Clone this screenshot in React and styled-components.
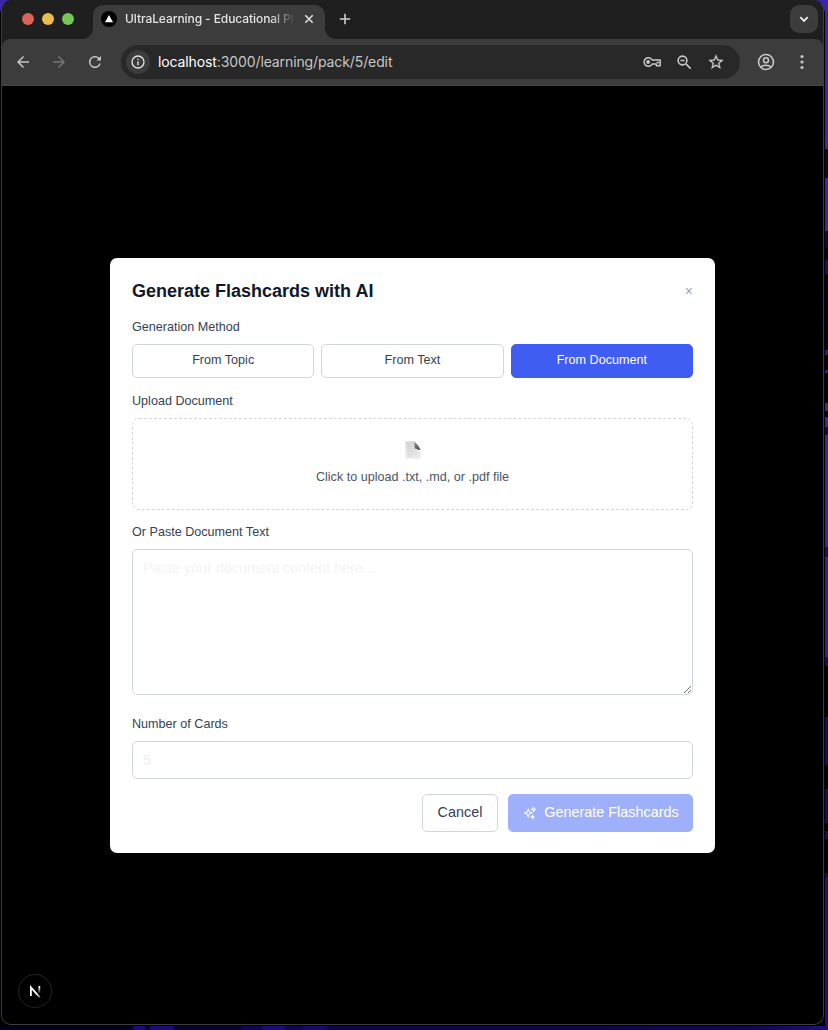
import React from "react";
import styled, { createGlobalStyle } from "styled-components";

const Global = createGlobalStyle`
  * { box-sizing: border-box; }
  html, body { margin: 0; height: 100%; overflow: hidden; }
  button, input, textarea { font: inherit; margin: 0; }
`;

const stripes = [
  [0, 149, "#3a26a8"], [149, 178, "#0a0520"], [178, 231, "#3a26a0"], [231, 247, "#120540"],
  [247, 260, "#04010c"], [260, 274, "#1e0a6a"], [274, 350, "#07021a"], [350, 355, "#2a1680"],
  [355, 370, "#04010c"], [370, 373, "#2c1a8c"], [373, 403, "#04010c"], [403, 411, "#3a26a0"],
  [411, 417, "#04010c"], [417, 427, "#3a26a0"], [427, 435, "#170750"], [435, 547, "#3a26a0"],
  [547, 557, "#1d0c66"], [557, 657, "#3320a0"], [657, 666, "#1b0670"], [666, 717, "#030108"],
  [717, 765, "#1b0670"], [765, 789, "#030108"], [789, 823, "#1b0670"], [823, 831, "#030108"],
  [831, 839, "#1b0670"], [839, 873, "#030108"], [873, 877, "#170750"], [877, 1030, "#1f0f78"],
];
const sideGradient = stripes.map(([a, b, c]) => `${c} ${a}px ${b}px`).join(", ");

const Desktop = styled.div`
  width: 828px;
  height: 1030px;
  padding: 0 4px 5px 1px;
  overflow: hidden;
  background:
    linear-gradient(180deg, ${sideGradient}) right top / 3px 100% no-repeat,
    linear-gradient(90deg, #03011a 0 132px, #1c0a78 134px 144px, #08032a 146px 149px,
      #1c0a78 151px 172px, #08032a 176px 240px, #120650 242px 262px, #1c0a78 263px 284px,
      #120650 286px 302px, #180a68 304px 325px, #0c0640 330px 600px, #120850 760px,
      #1f0f78 828px) left bottom / 100% 4px no-repeat,
    linear-gradient(180deg, #3a26a8 0 10px, #020106 12px);
`;
const Window = styled.div`
  height: 1025px;
  display: flex;
  flex-direction: column;
  overflow: hidden;
  background: #1f1f1f;
  border: 1px solid #3c3c3c;
  border-top-color: #1f1f1f;
  border-radius: 10px;
  font-family: "Liberation Sans", Arial, sans-serif;
`;
const TabStrip = styled.div`
  height: 38px;
  flex: none;
  display: flex;
  background: #1f1f1f;
`;
const Lights = styled.div`
  width: 91px;
  padding: 12px 0 0 20px;
  display: flex;
  gap: 8px;
`;
const Light = styled.i`
  width: 12px;
  height: 12px;
  border-radius: 50%;
  background: ${(p) => p.$color};
`;
const Tab = styled.div`
  position: relative;
  width: 232px;
  height: 34px;
  margin-top: 4px;
  padding: 0 10px 6px 8px;
  display: flex;
  align-items: center;
  background: #3c3c3c;
  border-radius: 10px 10px 0 0;
  &::before, &::after {
    content: "";
    position: absolute;
    bottom: 0;
    width: 10px;
    height: 10px;
  }
  &::before { left: -10px; background: radial-gradient(circle at 0 0, transparent 9.5px, #3c3c3c 10px); }
  &::after { right: -10px; background: radial-gradient(circle at 100% 0, transparent 9.5px, #3c3c3c 10px); }
`;
const TabTitle = styled.span`
  flex: 1;
  margin: 0 4px 0 8px;
  overflow: hidden;
  white-space: nowrap;
  font: 500 12px/18px Inter, Roboto, sans-serif;
  letter-spacing: -0.08px;
  color: #e3e3e3;
  mask-image: linear-gradient(90deg, #000 146px, transparent 170px);
`;
const NewTab = styled.div`
  padding: 12px 0 0 14px;
  height: 24px;
  line-height: 0;
`;
const TabSearch = styled.div`
  width: 28px;
  height: 28px;
  margin: 4px 5px 0 auto;
  display: grid;
  place-items: center;
  border-radius: 9px;
  background: #3c3c3c;
`;
const Toolbar = styled.div`
  height: 47px;
  flex: none;
  padding: 0 13px 0 12px;
  display: flex;
  align-items: center;
  background: #3c3c3c;
  border-bottom: 1px solid #484848;
  border-radius: 8px 8px 0 0;
`;
const NavButtons = styled.div`
  width: 107px;
  display: flex;
  gap: 18px;
`;
const AddressBar = styled.div`
  width: 619px;
  height: 34px;
  padding: 0 15px 0 5px;
  display: flex;
  align-items: center;
  border-radius: 17px;
  background: #282828;
`;
const SiteInfo = styled.div`
  width: 24px;
  height: 24px;
  display: grid;
  place-items: center;
  border-radius: 50%;
  background: #3c3c3c;
`;
const Url = styled.span`
  flex: 1;
  margin-left: 8px;
  font: 400 14px/20px Inter, Roboto, sans-serif;
  letter-spacing: -0.11px;
  color: #c7c7c7;
  b { font-weight: 400; color: #fff; }
`;
const AddressIcons = styled.div`
  display: flex;
  align-items: center;
  gap: 13.5px;
`;
const ToolbarEnd = styled.div`
  margin-left: auto;
  display: flex;
  align-items: center;
  gap: 18px;
`;
const Viewport = styled.main`
  position: relative;
  flex: 1;
  padding: 172px 0 0 108px;
  background: #000;
`;
const Dialog = styled.section`
  width: 605px;
  height: 595px;
  padding: 22px;
  background: #fff;
  border-radius: 7px;
`;
const DialogHeader = styled.header`
  height: 22px;
  margin-bottom: 16px;
  display: flex;
  justify-content: space-between;
  align-items: center;
`;
const Title = styled.h2`
  margin: 0;
  font-size: 18px;
  line-height: 22px;
  font-weight: 700;
  color: #101828;
`;
const Close = styled.button`
  padding: 0;
  border: 0;
  background: none;
  font-size: 14px;
  line-height: 20px;
  color: #99a1af;
`;
const Label = styled.label`
  display: block;
  height: 18px;
  margin-bottom: 8px;
  font-size: 12.6px;
  line-height: 18px;
  color: #364153;
`;
const Methods = styled.div`
  display: grid;
  grid-template-columns: repeat(3, 1fr);
  gap: 7px;
  margin-bottom: 14px;
`;
const Method = styled.button`
  height: 34px;
  padding: 0 0 2px;
  border: 1px solid ${(p) => (p.$active ? "#405df2" : "#d1d5dc")};
  border-radius: 5px;
  background: ${(p) => (p.$active ? "#405df2" : "#fff")};
  color: ${(p) => (p.$active ? "#fff" : "#364153")};
  font-size: 12.6px;
`;
const DropZone = styled.div`
  height: 92px;
  margin-bottom: 13px;
  padding-top: 22px;
  display: flex;
  flex-direction: column;
  align-items: center;
  gap: 9px;
  border: 1px dashed #d1d5dc;
  border-radius: 7px;
  font-size: 12.6px;
  line-height: 18px;
  color: #4a5565;
`;
const TextArea = styled.textarea`
  display: block;
  width: 100%;
  height: 146px;
  margin-bottom: 20px;
  padding: 8px 10px;
  border: 1px solid #d1d5dc;
  border-radius: 5px;
  background: #fff;
  font-size: 14.4px;
  line-height: 21px;
  resize: vertical;
  &::placeholder { color: #f4f4f5; }
`;
const NumberInput = styled.input`
  display: block;
  width: 100%;
  height: 38px;
  padding: 0 10px;
  border: 1px solid #d1d5dc;
  border-radius: 5px;
  background: #fff;
  font-size: 14.4px;
  color: #ededed;
`;
const Actions = styled.footer`
  margin-top: 15px;
  display: flex;
  justify-content: flex-end;
  gap: 10px;
`;
const Action = styled.button`
  width: ${(p) => p.$width}px;
  height: 38px;
  padding: 0 0 2px;
  display: flex;
  justify-content: center;
  align-items: center;
  gap: 8px;
  white-space: nowrap;
  border: 1px solid ${(p) => (p.$primary ? "#9fb0fb" : "#d1d5dc")};
  border-radius: 5px;
  background: ${(p) => (p.$primary ? "#9fb0fb" : "#fff")};
  color: ${(p) => (p.$primary ? "#fff" : "#364153")};
  font-size: 14.4px;
  svg { margin: 2px -1px 0 1px; }
`;
const DevBadge = styled.div`
  position: absolute;
  left: 16px;
  bottom: 16px;
  width: 34px;
  height: 34px;
  display: grid;
  place-items: center;
  border: 1.5px solid #242424;
  border-radius: 50%;
  background: #000;
`;

const Icon = ({ size = 20, box = 24, color = "#c7c7c7", children }) => (
  <svg width={size} height={size} viewBox={`0 0 ${box} ${box}`} fill={color}>{children}</svg>
);

const BackIcon = () => (
  <Icon size={18}><path d="M20 11H7.8l5.6-5.6L12 4l-8 8 8 8 1.4-1.4L7.8 13H20z" /></Icon>
);
const ForwardIcon = () => (
  <Icon size={18} color="#757575"><path d="M4 13h12.2l-5.6 5.6L12 20l8-8-8-8-1.4 1.4 5.6 5.6H4z" /></Icon>
);
const ReloadIcon = () => (
  <Icon size={18}><path d="M17.65 6.35A8 8 0 1 0 19.73 14h-2.08A6 6 0 1 1 12 6c1.66 0 3.14.69 4.22 1.78L14 10h6V4z" /></Icon>
);
const InfoIcon = () => (
  <Icon size={16} color="#e3e3e3"><path d="M11 7h2v2h-2zm0 4h2v6h-2zm1-9a10 10 0 1 0 0 20 10 10 0 0 0 0-20zm0 18a8 8 0 1 1 0-16 8 8 0 0 1 0 16z" /></Icon>
);
const KeyIcon = () => (
  <svg width="18" height="12" viewBox="0 0 18 12" fill="none" stroke="#c7c7c7" strokeWidth="1.5">
    <path d="M9.2 4H17.2v5.8h-3.8V8H9.2A4.3 4.3 0 1 1 9.2 4z" strokeLinejoin="round" />
    <path d="M13.6 6.4h3" />
    <circle cx="5.1" cy="6" r="1.9" fill="#c7c7c7" stroke="none" />
  </svg>
);
const ZoomIcon = () => (
  <Icon size={19}><path d="M15.5 14h-.79l-.28-.27A6.5 6.5 0 1 0 13.73 14.43l.27.28v.79l5 4.99L20.49 19zm-6 0a4.5 4.5 0 1 1 0-9 4.5 4.5 0 0 1 0 9zM6.8 8.6h5.4v1.8H6.8z" /></Icon>
);
const StarIcon = () => (
  <Icon size={18}><path stroke="#c7c7c7" strokeWidth=".3" d="m22 9.24-7.19-.62L12 2 9.19 8.63 2 9.24l5.46 4.73L5.82 21 12 17.27 18.18 21l-1.63-7.03zM12 15.4l-3.76 2.27 1-4.28-3.32-2.88 4.38-.38L12 6.1l1.71 4.04 4.38.38-3.32 2.88 1 4.28z" /></Icon>
);
const ProfileIcon = () => (
  <Icon><g fill="none" stroke="#c7c7c7" strokeWidth="1.9"><circle cx="12" cy="12" r="9" /><circle cx="12" cy="9.8" r="3" /><path d="M5.8 18.2c3.4-3.2 9-3.2 12.4 0" /></g></Icon>
);
const MenuIcon = () => (
  <svg width="16" height="20" viewBox="0 0 16 20" fill="#c7c7c7">
    <circle cx="8" cy="4.5" r="1.6" /><circle cx="8" cy="10" r="1.6" /><circle cx="8" cy="15.5" r="1.6" />
  </svg>
);
const Cross = () => (
  <svg width="12" height="12" viewBox="0 0 12 12" stroke="#dedede" strokeWidth="1.6"><path d="m2.3 2.3 7.4 7.4m0-7.4L2.3 9.7" /></svg>
);
const Plus = () => (
  <svg width="12" height="12" viewBox="0 0 12 12" stroke="#cfcfcf" strokeWidth="1.6"><path d="M6 .8v10.4M.8 6h10.4" /></svg>
);
const Favicon = () => (
  <svg width="16" height="16" viewBox="0 0 16 16"><circle cx="8" cy="8" r="8" /><path d="m8 4 4 7.2H4z" fill="#fff" /></svg>
);
const Chevron = () => (
  <svg width="12" height="12" viewBox="0 0 12 12" fill="none" stroke="#eee" strokeWidth="1.8"><path d="m2.3 4.2 3.7 3.7 3.7-3.7" /></svg>
);
const PageIcon = () => (
  <svg width="16" height="18" viewBox="0 0 16 18">
    <defs>
      <linearGradient id="sheet" x2="0" y2="1"><stop stopColor="#d6d6d6" /><stop offset="1" stopColor="#ececec" /></linearGradient>
      <linearGradient id="fold" x2="1" y2="1"><stop stopColor="#999" /><stop offset="1" stopColor="#4c4c4c" /></linearGradient>
    </defs>
    <path d="M.5.2H8q2 0 4 3.5L15.5 9v8.8H.5z" fill="url(#sheet)" />
    <path d="M7 .2c2.5.4 3 2.5 2.4 5.5.1 2.4 2.8 2.7 6.1 3.4C14.5 5.2 10.5.6 7 .2z" fill="url(#fold)" />
    <path d="M9 6.3c.2 2.4 2.8 2.6 6.4 2.9V11C12 9.5 9.5 9 9 6.3z" fill="#fafafa" />
    <path d="M2.5 3h4M2.5 5.5h5M2.5 8h6M2.5 10.5h9M2.5 13h9M2.5 15h4" stroke="#c9c9c9" strokeWidth=".5" />
  </svg>
);
const Sparkles = () => (
  <svg width="14" height="14" viewBox="0 0 24 24" fill="none" stroke="#fff" strokeWidth="1.8" strokeLinejoin="round">
    <path d="M9.8 15.9 9 18.75l-.8-2.85a4.5 4.5 0 0 0-3.1-3.1L2.25 12l2.85-.8a4.5 4.5 0 0 0 3.1-3.1L9 5.25l.8 2.85a4.5 4.5 0 0 0 3.1 3.1l2.85.8-2.85.8a4.5 4.5 0 0 0-3.1 3.1z" />
    <path d="M18.26 8.7 18 9.75l-.26-1.04a3.4 3.4 0 0 0-2.45-2.45L14.25 6l1.04-.26a3.4 3.4 0 0 0 2.45-2.45L18 2.25l.26 1.04a3.4 3.4 0 0 0 2.45 2.45l1.04.26-1.04.26a3.4 3.4 0 0 0-2.45 2.45z" />
    <path d="m16.9 20.57-.4 1.18-.4-1.18a2.3 2.3 0 0 0-1.42-1.42l-1.18-.4 1.18-.4a2.3 2.3 0 0 0 1.42-1.42l.4-1.18.4 1.18a2.3 2.3 0 0 0 1.42 1.42l1.18.4-1.18.4a2.3 2.3 0 0 0-1.42 1.42z" />
  </svg>
);
const NextLogo = () => (
  <svg width="14" height="16" viewBox="0 0 14 16" fill="none" strokeWidth="1.8">
    <defs>
      <linearGradient id="diag" x1="2" y1="2" x2="12" y2="14" gradientUnits="userSpaceOnUse"><stop offset=".7" stopColor="#fff" /><stop offset="1" stopColor="#fff" stopOpacity=".4" /></linearGradient>
      <linearGradient id="stem" x1="0" y1="2" x2="0" y2="11" gradientUnits="userSpaceOnUse"><stop offset=".2" stopColor="#fff" /><stop offset="1" stopColor="#fff" stopOpacity="0" /></linearGradient>
    </defs>
    <path d="M2.9 13V4.4L11.8 14.4" stroke="url(#diag)" />
    <path d="M11.3 3v7" stroke="url(#stem)" />
  </svg>
);

export default function App() {
  return (
    <>
      <Global />
      <Desktop>
        <Window>
          <TabStrip>
            <Lights>
              <Light $color="#dd6359" /><Light $color="#ebbc4e" /><Light $color="#76c655" />
            </Lights>
            <Tab>
              <Favicon />
              <TabTitle>UltraLearning - Educational Pl</TabTitle>
              <Cross />
            </Tab>
            <NewTab><Plus /></NewTab>
            <TabSearch><Chevron /></TabSearch>
          </TabStrip>
          <Toolbar>
            <NavButtons><BackIcon /><ForwardIcon /><ReloadIcon /></NavButtons>
            <AddressBar>
              <SiteInfo><InfoIcon /></SiteInfo>
              <Url><b>localhost</b>:3000/learning/pack/5/edit</Url>
              <AddressIcons><KeyIcon /><ZoomIcon /><StarIcon /></AddressIcons>
            </AddressBar>
            <ToolbarEnd><ProfileIcon /><MenuIcon /></ToolbarEnd>
          </Toolbar>
          <Viewport>
            <Dialog>
              <DialogHeader>
                <Title>Generate Flashcards with AI</Title>
                <Close>×</Close>
              </DialogHeader>
              <Label>Generation Method</Label>
              <Methods>
                <Method>From Topic</Method>
                <Method>From Text</Method>
                <Method $active>From Document</Method>
              </Methods>
              <Label>Upload Document</Label>
              <DropZone>
                <PageIcon />
                <span>Click to upload .txt, .md, or .pdf file</span>
              </DropZone>
              <Label>Or Paste Document Text</Label>
              <TextArea placeholder="Paste your document content here..." />
              <Label>Number of Cards</Label>
              <NumberInput defaultValue="5" />
              <Actions>
                <Action $width={76}>Cancel</Action>
                <Action $width={185} $primary><Sparkles />Generate Flashcards</Action>
              </Actions>
            </Dialog>
            <DevBadge><NextLogo /></DevBadge>
          </Viewport>
        </Window>
      </Desktop>
    </>
  );
}
